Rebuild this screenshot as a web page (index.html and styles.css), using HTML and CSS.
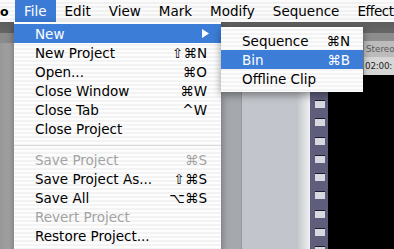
FILE: index.html
```html
<!DOCTYPE html>
<html>
<head>
<meta charset="utf-8">
<link rel="stylesheet" href="styles.css">
</head>
<body>
<div class="screen">
  <div class="menubar">
    <span class="app">o</span>
    <span class="title active">File</span>
    <span class="title">Edit</span>
    <span class="title">View</span>
    <span class="title">Mark</span>
    <span class="title">Modify</span>
    <span class="title">Sequence</span>
    <span class="title last">Effect</span>
  </div>
  <div class="desk">
    <div class="toolbar"></div>
    <div class="panes">
      <div class="pane-left"></div>
      <div class="pane-mid"></div>
      <div class="pane-right">
        <div class="tc-area">
          <div class="tab">Stereo</div>
          <div class="timecode">02:00:</div>
        </div>
        <div class="viewer">
          <div class="film">
            <span class="hole"></span><span class="hole"></span><span class="hole"></span>
            <span class="hole"></span><span class="hole"></span><span class="hole"></span>
            <span class="hole"></span><span class="hole"></span><span class="hole"></span>
          </div>
          <div class="screen-black"></div>
        </div>
      </div>
    </div>
  </div>

  <div class="menu file-menu">
    <div class="item hl"><span>New</span><svg class="arrow" width="7" height="9" viewBox="0 0 7 9"><polygon points="0,0 7,4.5 0,9" fill="#fff"/></svg></div>
    <div class="item"><span>New Project</span><span class="key">⇧⌘N</span></div>
    <div class="item"><span>Open...</span><span class="key">⌘O</span></div>
    <div class="item"><span>Close Window</span><span class="key">⌘W</span></div>
    <div class="item"><span>Close Tab</span><span class="key">^W</span></div>
    <div class="item"><span>Close Project</span></div>
    <div class="sep"></div>
    <div class="item dis"><span>Save Project</span><span class="key">⌘S</span></div>
    <div class="item"><span>Save Project As...</span><span class="key">⇧⌘S</span></div>
    <div class="item"><span>Save All</span><span class="key">⌥⌘S</span></div>
    <div class="item dis"><span>Revert Project</span></div>
    <div class="item"><span>Restore Project...</span></div>
  </div>

  <div class="menu submenu">
    <div class="item"><span>Sequence</span><span class="key">⌘N</span></div>
    <div class="item hl"><span>Bin</span><span class="key">⌘B</span></div>
    <div class="item"><span>Offline Clip</span></div>
  </div>
</div>
</body>
</html>
```

FILE: styles.css
```css
html, body {
  margin: 0;
  padding: 0;
}
body {
  font-family: "DejaVu Sans", "Liberation Sans", sans-serif;
  font-size: 13.5px;
  color: #000;
}
.screen {
  position: relative;
  width: 394px;
  height: 249px;
  overflow: hidden;
  display: flex;
  flex-direction: column;
}
.menubar {
  flex: 0 0 22px;
  display: flex;
  align-items: stretch;
  white-space: nowrap;
  overflow: hidden;
  background: repeating-linear-gradient(#fbfbfb 0 2px, #f1f1f1 2px 4px);
  line-height: 21px;
  box-sizing: border-box;
  padding-top: 1px;
}
.app {
  flex: 0 0 15px;
  font-weight: bold;
  font-size: 12.5px;
}
.title {
  padding: 0 9px;
  flex: 0 0 auto;
}
.title.last {
  padding-right: 0;
  letter-spacing: -0.5px;
}
.title.active {
  background: #3b7bd6;
  color: #fff;
  margin-top: -1px;
  padding-top: 1px;
}
.desk {
  flex: 1;
  display: flex;
  flex-direction: column;
}
.toolbar {
  flex: 0 0 11px;
  background: linear-gradient(#5d5d5d, #666);
}
.panes {
  flex: 1;
  display: flex;
}
.pane-left {
  flex: 0 0 221px;
  background:
    linear-gradient(#8a8a8a 0 10px, transparent 10px),
    linear-gradient(90deg, #979797, #aaaaaa 14px);
}
.pane-mid {
  flex: 0 0 89px;
  background: linear-gradient(90deg, #a5a8ad 0 20px, #95989d 20px 21px, #c2c5cb 21px 76px, #f0f0f2 89px);
}
.pane-right {
  flex: 1;
  display: flex;
  flex-direction: column;
  overflow: hidden;
}
.tc-area {
  flex: 0 0 42px;
  background: #8d8d8d;
  box-sizing: border-box;
  padding: 8px 0 0 54px;
  font-size: 8.8px;
  white-space: nowrap;
}
.tab {
  height: 16px;
  line-height: 16px;
  background: #bcbcbc;
  color: #5a5a5a;
  padding-left: 2px;
}
.timecode {
  height: 18px;
  line-height: 18px;
  background: #d6d6d6;
  color: #222;
  padding-left: 1px;
  letter-spacing: -0.2px;
}
.viewer {
  flex: 1;
  display: flex;
}
.film {
  flex: 0 0 18px;
  background: #5e5e7c;
  display: flex;
  flex-direction: column;
  gap: 10.3px;
  padding-top: 25px;
  box-sizing: border-box;
}
.hole {
  display: block;
  margin-left: 5px;
  width: 10px;
  height: 8px;
  flex: 0 0 8px;
  background: #d8d8e0;
  border-top: 1px solid #1c1c2c;
  box-sizing: border-box;
}
.screen-black {
  flex: 1;
  background: #000;
}
.menu {
  position: absolute;
  background: repeating-linear-gradient(#fdfdfd 0 2px, #f3f3f3 2px 4px);
  box-shadow: 0 3px 8px rgba(0, 0, 0, 0.4);
  white-space: nowrap;
}
.file-menu {
  left: 14px;
  top: 22px;
  width: 207px;
  height: 232px;
  padding-top: 2px;
  box-sizing: border-box;
}
.submenu {
  left: 221px;
  top: 27px;
  width: 142px;
  padding: 4px 0;
}
.item {
  display: flex;
  justify-content: space-between;
  align-items: flex-start;
  height: 19px;
  box-sizing: border-box;
  padding: 2px 14px 0 21px;
  line-height: 17px;
}
.submenu .item {
  padding-right: 13px;
}
.item.hl {
  background: #3c7dd8;
  color: #fff;
}
.item.dis {
  color: #a3a3a3;
}
.arrow {
  margin-top: 3px;
  margin-right: -2px;
}
.sep {
  height: 12px;
  box-sizing: border-box;
  padding-top: 7px;
}
.sep::before {
  content: "";
  display: block;
  border-top: 1px solid #dadada;
}
```
